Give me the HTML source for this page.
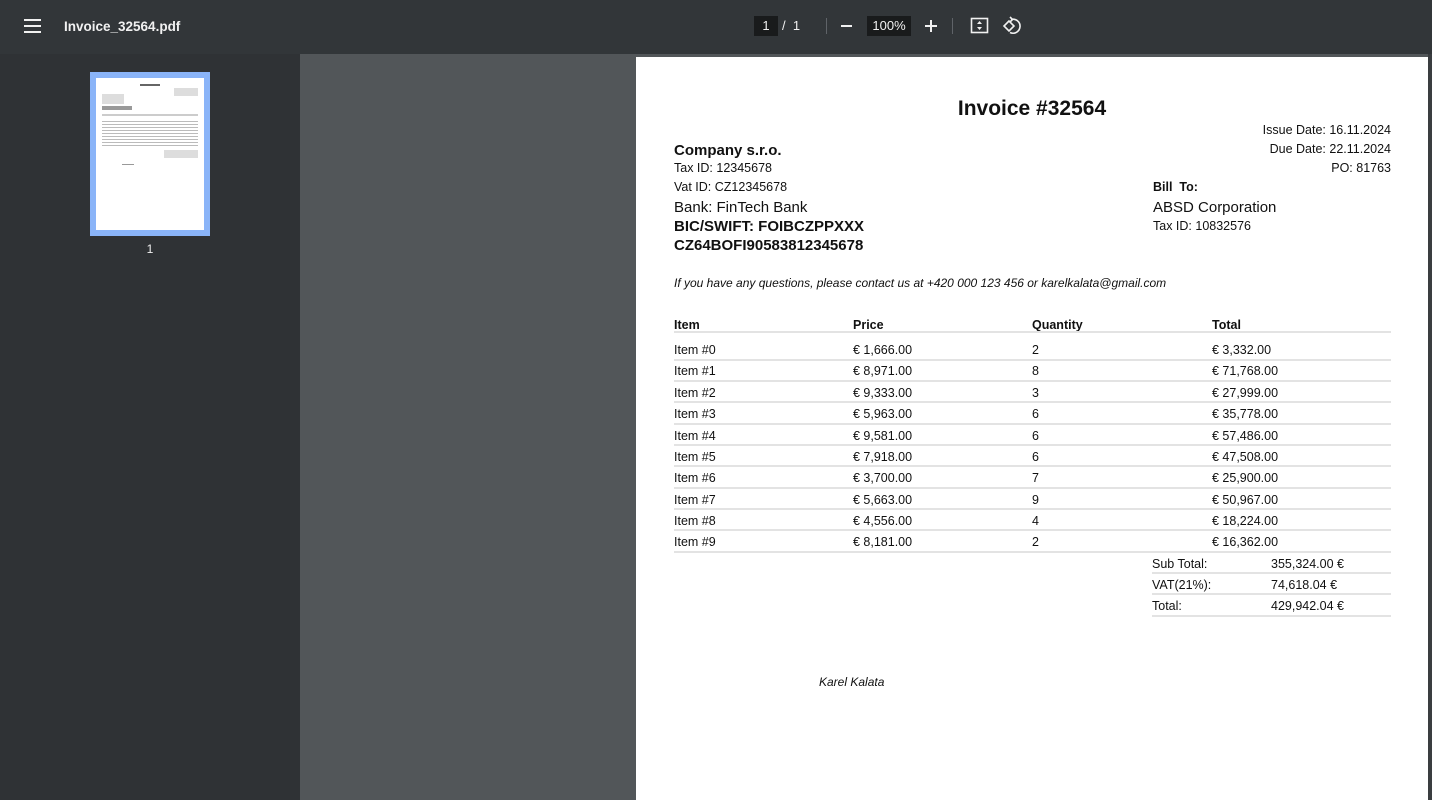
<!DOCTYPE html>
<html><head><meta charset="utf-8"><style>
*{margin:0;padding:0;box-sizing:border-box}
body{width:1432px;height:800px;overflow:hidden;background:#525659;font-family:"Liberation Sans",sans-serif;position:relative}
.top{position:absolute;left:0;top:0;width:1432px;height:54px;background:#323639;color:#f1f1f1}
.side{position:absolute;left:0;top:54px;width:300px;height:746px;background:#2f3235}
.page{position:absolute;left:636px;top:57px;width:792px;height:743px;background:#fff}
.sb{position:absolute;left:1428px;top:54px;width:4px;height:746px;background:#3a3d40}
.t{position:absolute;white-space:nowrap;color:#111;font-size:12.5px;line-height:16px;transform:translateY(1px)}
.b{font-weight:bold}
.r{text-align:right}
.ln{position:absolute;height:2px;background:#e3e3e3}
</style></head><body>
<div class="top">
  <div style="position:absolute;left:24px;top:19px;width:17px;height:2px;background:#f1f1f1"></div>
  <div style="position:absolute;left:24px;top:25px;width:17px;height:2px;background:#f1f1f1"></div>
  <div style="position:absolute;left:24px;top:31px;width:17px;height:2px;background:#f1f1f1"></div>
  <div style="position:absolute;left:64px;top:18px;font-size:13.5px;font-weight:bold;line-height:18px">Invoice_32564.pdf</div>
  <div style="position:absolute;left:754px;top:16px;width:24px;height:20px;background:#191b1c;font-size:13px;line-height:20px;text-align:center">1</div>
  <div style="position:absolute;left:782px;top:16px;font-size:13px;line-height:20px">/ &nbsp;1</div>
  <div style="position:absolute;left:826px;top:18px;width:1px;height:16px;background:#5f6368"></div>
  <div style="position:absolute;left:841px;top:25px;width:11px;height:2px;background:#f1f1f1"></div>
  <div style="position:absolute;left:867px;top:16px;width:44px;height:20px;background:#191b1c;font-size:13px;line-height:20px;text-align:center">100%</div>
  <div style="position:absolute;left:925px;top:25px;width:12px;height:2px;background:#f1f1f1"></div>
  <div style="position:absolute;left:930px;top:20px;width:2px;height:12px;background:#f1f1f1"></div>
  <div style="position:absolute;left:952px;top:18px;width:1px;height:16px;background:#5f6368"></div>
  <svg style="position:absolute;left:970px;top:17px" width="20" height="18" viewBox="0 0 20 18"><rect x="1.5" y="1.5" width="16" height="14" fill="none" stroke="#f1f1f1" stroke-width="1.6"/><path d="M9.5 4l-2.5 3h5zM9.5 13l-2.5-3h5z" fill="#f1f1f1"/></svg>
  <svg style="position:absolute;left:1002px;top:16px" width="20" height="20" viewBox="0 0 20 20"><path d="M7 5l-5 5 5 5 5-5z" fill="none" stroke="#f1f1f1" stroke-width="1.6"/><path d="M9 3.5a7 7 0 1 1 -1 13" fill="none" stroke="#f1f1f1" stroke-width="1.6"/><path d="M8 1l2.5 2.5-2.5 2.5" fill="none" stroke="#f1f1f1" stroke-width="1.6"/></svg>
</div>
<div class="side">
  <div style="position:absolute;left:90px;top:18px;width:120px;height:164px;background:#8ab4f8"></div>
  <div style="position:absolute;left:96px;top:24px;width:108px;height:152px;background:#fff">
    <div style="position:absolute;left:44px;top:6px;width:20px;height:2px;background:#666"></div>
    <div style="position:absolute;left:6px;top:16px;width:22px;height:10px;background:#ddd"></div>
    <div style="position:absolute;left:78px;top:10px;width:24px;height:8px;background:#ddd"></div>
    <div style="position:absolute;left:6px;top:28px;width:30px;height:4px;background:#999"></div>
    <div style="position:absolute;left:6px;top:36px;width:96px;height:2px;background:#ccc"></div>
    <div style="position:absolute;left:6px;top:42px;width:96px;height:28px;background:repeating-linear-gradient(#fff 0 1px,#bbb 1px 2px,#fff 2px 3px)"></div>
    <div style="position:absolute;left:68px;top:72px;width:34px;height:8px;background:#ddd"></div>
    <div style="position:absolute;left:26px;top:86px;width:12px;height:1px;background:#999"></div>
  </div>
  <div style="position:absolute;left:0;width:300px;top:188px;text-align:center;color:#f1f1f1;font-size:12px">1</div>
</div>
<div class="sb"></div>
<div class="page"></div>

<div class="t b" style="left:636px;width:792px;text-align:center;top:95px;font-size:21px;line-height:26px">Invoice #32564</div>
<div class="t r" style="right:41px;top:121px">Issue Date: 16.11.2024</div>
<div class="t r" style="right:41px;top:140px">Due Date: 22.11.2024</div>
<div class="t r" style="right:41px;top:159px">PO: 81763</div>
<div class="t b" style="left:674px;top:141px;font-size:15px;line-height:18px">Company s.r.o.</div>
<div class="t" style="left:674px;top:159px">Tax ID: 12345678</div>
<div class="t" style="left:674px;top:178px">Vat ID: CZ12345678</div>
<div class="t" style="left:674px;top:198px;font-size:15px;line-height:18px">Bank: FinTech Bank</div>
<div class="t b" style="left:674px;top:217px;font-size:15px;line-height:18px">BIC/SWIFT: FOIBCZPPXXX</div>
<div class="t b" style="left:674px;top:236px;font-size:15px;line-height:18px">CZ64BOFI90583812345678</div>
<div class="t b" style="left:1153px;top:178px">Bill &nbsp;To:</div>
<div class="t" style="left:1153px;top:198px;font-size:15px;line-height:18px">ABSD Corporation</div>
<div class="t" style="left:1153px;top:217px">Tax ID: 10832576</div>
<div class="t" style="left:674px;top:274px;font-style:italic;font-size:12px">If you have any questions, please contact us at +420 000 123 456 or karelkalata@gmail.com</div>

<div class="t b" style="left:674px;top:316px">Item</div>
<div class="t b" style="left:853px;top:316px">Price</div>
<div class="t b" style="left:1032px;top:316px">Quantity</div>
<div class="t b" style="left:1212px;top:316px">Total</div>
<div class="ln" style="left:674px;width:717px;top:331px"></div>

<div class="t" style="left:674px;top:341px">Item #0</div><div class="t" style="left:853px;top:341px">€ 1,666.00</div><div class="t" style="left:1032px;top:341px">2</div><div class="t" style="left:1212px;top:341px">€ 3,332.00</div><div class="ln" style="left:674px;width:717px;top:359px"></div>
<div class="t" style="left:674px;top:362px">Item #1</div><div class="t" style="left:853px;top:362px">€ 8,971.00</div><div class="t" style="left:1032px;top:362px">8</div><div class="t" style="left:1212px;top:362px">€ 71,768.00</div><div class="ln" style="left:674px;width:717px;top:380px"></div>
<div class="t" style="left:674px;top:384px">Item #2</div><div class="t" style="left:853px;top:384px">€ 9,333.00</div><div class="t" style="left:1032px;top:384px">3</div><div class="t" style="left:1212px;top:384px">€ 27,999.00</div><div class="ln" style="left:674px;width:717px;top:401px"></div>
<div class="t" style="left:674px;top:405px">Item #3</div><div class="t" style="left:853px;top:405px">€ 5,963.00</div><div class="t" style="left:1032px;top:405px">6</div><div class="t" style="left:1212px;top:405px">€ 35,778.00</div><div class="ln" style="left:674px;width:717px;top:423px"></div>
<div class="t" style="left:674px;top:427px">Item #4</div><div class="t" style="left:853px;top:427px">€ 9,581.00</div><div class="t" style="left:1032px;top:427px">6</div><div class="t" style="left:1212px;top:427px">€ 57,486.00</div><div class="ln" style="left:674px;width:717px;top:444px"></div>
<div class="t" style="left:674px;top:448px">Item #5</div><div class="t" style="left:853px;top:448px">€ 7,918.00</div><div class="t" style="left:1032px;top:448px">6</div><div class="t" style="left:1212px;top:448px">€ 47,508.00</div><div class="ln" style="left:674px;width:717px;top:465px"></div>
<div class="t" style="left:674px;top:469px">Item #6</div><div class="t" style="left:853px;top:469px">€ 3,700.00</div><div class="t" style="left:1032px;top:469px">7</div><div class="t" style="left:1212px;top:469px">€ 25,900.00</div><div class="ln" style="left:674px;width:717px;top:487px"></div>
<div class="t" style="left:674px;top:491px">Item #7</div><div class="t" style="left:853px;top:491px">€ 5,663.00</div><div class="t" style="left:1032px;top:491px">9</div><div class="t" style="left:1212px;top:491px">€ 50,967.00</div><div class="ln" style="left:674px;width:717px;top:508px"></div>
<div class="t" style="left:674px;top:512px">Item #8</div><div class="t" style="left:853px;top:512px">€ 4,556.00</div><div class="t" style="left:1032px;top:512px">4</div><div class="t" style="left:1212px;top:512px">€ 18,224.00</div><div class="ln" style="left:674px;width:717px;top:529px"></div>
<div class="t" style="left:674px;top:533px">Item #9</div><div class="t" style="left:853px;top:533px">€ 8,181.00</div><div class="t" style="left:1032px;top:533px">2</div><div class="t" style="left:1212px;top:533px">€ 16,362.00</div><div class="ln" style="left:674px;width:717px;top:551px"></div>

<div class="t" style="left:1152px;top:555px">Sub Total:</div><div class="t" style="left:1271px;top:555px">355,324.00 €</div><div class="ln" style="left:1152px;width:239px;top:572px"></div>
<div class="t" style="left:1152px;top:576px">VAT(21%):</div><div class="t" style="left:1271px;top:576px">74,618.04 €</div><div class="ln" style="left:1152px;width:239px;top:593px"></div>
<div class="t" style="left:1152px;top:597px">Total:</div><div class="t" style="left:1271px;top:597px">429,942.04 €</div><div class="ln" style="left:1152px;width:239px;top:615px"></div>

<div class="t" style="left:819px;top:673px;font-style:italic;font-size:12px">Karel Kalata</div>
</body></html>
